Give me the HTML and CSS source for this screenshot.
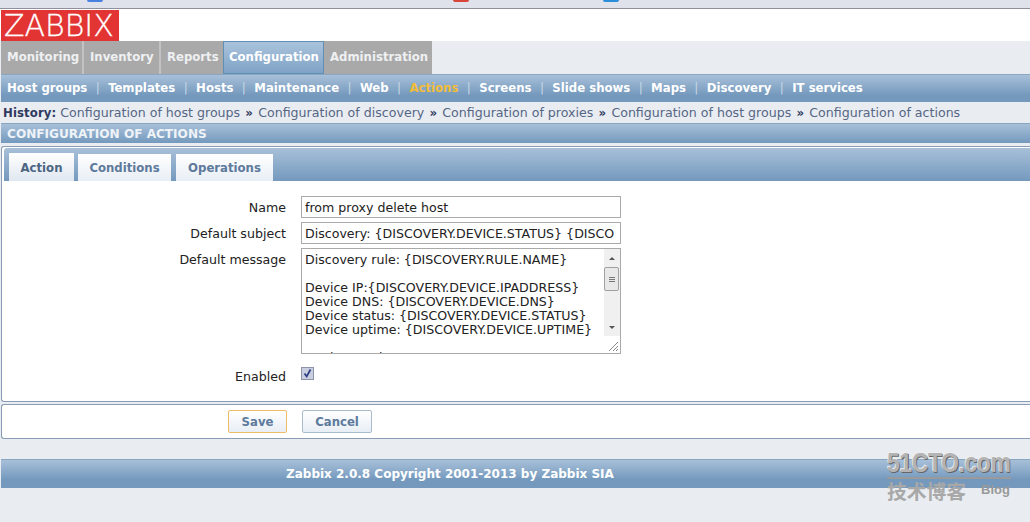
FILE: index.html
```html
<!DOCTYPE html>
<html lang="en">
<head>
<meta charset="utf-8">
<title>Configuration of actions</title>
<link rel="stylesheet" href="styles.css">
</head>
<body>
<div class="browserstrip">
  <span class="fav fav-a"></span><span class="fav fav-b"></span><span class="fav fav-c"></span>
</div>
<header class="logo-row"><div class="logo">ZABBIX</div></header>
<nav class="mainnav">
  <a class="mtab">Monitoring</a><a class="mtab">Inventory</a><a class="mtab">Reports</a><a class="mtab active">Configuration</a><a class="mtab">Administration</a>
</nav>
<nav class="subnav">
  <a>Host groups</a><i>|</i><a>Templates</a><i>|</i><a>Hosts</a><i>|</i><a>Maintenance</a><i>|</i><a>Web</a><i>|</i><a class="cur">Actions</a><i>|</i><a>Screens</a><i>|</i><a>Slide shows</a><i>|</i><a>Maps</a><i>|</i><a>Discovery</a><i>|</i><a>IT services</a>
</nav>
<div class="history"><b>History:</b> Configuration of host groups <b class="sep">»</b> Configuration of discovery <b class="sep">»</b> Configuration of proxies <b class="sep">»</b> Configuration of host groups <b class="sep">»</b> Configuration of actions</div>
<div class="titlebar">CONFIGURATION OF ACTIONS</div>
<section class="panel">
  <div class="tabs">
    <a class="tab on">Action</a><a class="tab">Conditions</a><a class="tab">Operations</a>
  </div>
  <form class="form">
    <label class="lbl">Name</label>
    <div class="field">from proxy delete host</div>
    <label class="lbl">Default subject</label>
    <div class="field">Discovery: {DISCOVERY.DEVICE.STATUS} {DISCO</div>
    <label class="lbl">Default message</label>
    <div class="area">
      <div class="areatext">Discovery rule: {DISCOVERY.RULE.NAME}<br><br>Device IP:{DISCOVERY.DEVICE.IPADDRESS}<br>Device DNS: {DISCOVERY.DEVICE.DNS}<br>Device status: {DISCOVERY.DEVICE.STATUS}<br>Device uptime: {DISCOVERY.DEVICE.UPTIME}<br><br>Device service</div>
      <div class="scrollbar">
        <svg class="arr" width="16" height="18" viewBox="0 0 16 18"><path d="M5 11l3-3 3 3z" fill="#555"/></svg>
        <div class="thumb"><span></span><span></span><span></span></div>
        <div class="track"></div>
        <svg class="arr" width="16" height="17" viewBox="0 0 16 17"><path d="M5 7l3 3 3-3z" fill="#555"/></svg>
        <svg class="grip" width="16" height="17" viewBox="0 0 16 17"><path d="M14 6L5 15M14 10l-5 5M14 13l-2 2" stroke="#888" fill="none"/></svg>
      </div>
    </div>
    <label class="lbl lbl-en">Enabled</label>
    <div class="check"><svg width="13" height="13" viewBox="0 0 13 13"><rect x=".5" y=".5" width="12" height="12" fill="#c9cfe0" stroke="#8e94a8"/><path d="M3.5 6.5l2.2 3 3.8-7" stroke="#2d3f80" stroke-width="1.7" fill="none"/></svg></div>
  </form>
</section>
<section class="actions">
  <button class="btn save" type="button">Save</button><button class="btn" type="button">Cancel</button>
</section>
<footer class="footer">Zabbix 2.0.8 Copyright 2001-2013 by Zabbix SIA</footer>
<div class="mark">
  <div class="mark-top"><span class="mark-word">51CTO.com</span></div>
  <div class="mark-bot"><span class="mark-cn">技术博客</span><span class="mark-blog">Blog</span></div>
</div>
</body>
</html>
```
FILE: styles.css
```css
* { box-sizing: border-box; }
html, body { margin: 0; padding: 0; }
body {
  width: 1030px; height: 522px; overflow: hidden; position: relative;
  background: #e9edf1; color: #222;
  font-family: "DejaVu Sans", Verdana, sans-serif; font-size: 12.6px;
}
.browserstrip {
  height: 9px; background: #dfe2ea; border-bottom: 1px solid #8f909c;
  display: flex; padding-left: 87px;
}
.fav { width: 16px; height: 2px; border-radius: 0 0 2px 2px; display: block; }
.fav-a { background: #4a80e0; }
.fav-b { background: #d9453a; margin-left: 350px; }
.fav-c { background: #2a8fd8; margin-left: 134px; }
.logo-row { height: 32px; background: #fff; padding: 1px 0 0 1px; }
.logo {
  width: 118px; height: 31px; background: #e33434; color: #fff;
  font: 200 30px/31px "DejaVu Sans", sans-serif;
  -webkit-text-stroke: .3px #fff;
  padding-left: 3px; white-space: nowrap;
}
.mainnav { height: 33px; display: flex; padding-left: 1px; }
.mtab {
  height: 33px; background: #a9a9a9; color: #eef0f2;
  font: 700 13px/32px "DejaVu Sans Condensed", "DejaVu Sans", sans-serif;
  padding: 0 6px; border-right: 2px solid #c2c2c2; white-space: nowrap;
}
.mtab:nth-child(1) { width: 83px; }
.mtab:nth-child(2) { width: 77px; }
.mtab:nth-child(3) { width: 62px; border-right: 0; }
.mtab:nth-child(4) { width: 101px; }
.mtab:nth-child(5) { width: 108px; border-right: 0; }
.mtab.active {
  background: linear-gradient(#aac3dc, #7fa3c6); color: #fff; border: 1px solid #5f8fb5; padding: 0 5px; line-height: 30px;
}
.subnav {
  height: 28px; margin-left: 1px; display: flex; align-items: center; padding: 0 0 2px 6px;
  background: linear-gradient(#a8c0d9, #7499bd 75%); border-top: 1px solid #8aa5c0;
  color: #fff; font: 700 13px "DejaVu Sans Condensed", "DejaVu Sans", sans-serif; white-space: nowrap;
}
.subnav i { font: 400 12px "DejaVu Sans", sans-serif; color: #c9d7e5; margin: 0 8.4px; }
.subnav .cur { color: #f2bd3a; }
.history {
  height: 21px; margin-left: 3px; line-height: 21px; color: #566685; white-space: nowrap;
}
.history b { color: #2f3a60; font: 700 13px "DejaVu Sans Condensed", "DejaVu Sans", sans-serif; letter-spacing: .1px; }
.history .sep { margin: 0 1.2px; }
.titlebar {
  height: 20px; margin-left: 1px; background: linear-gradient(#a8c0d9, #7499bd);
  border-top: 1px solid #8aa5c0; color: #eef3f8; font-weight: 700; font-size: 12.1px;
  line-height: 20px; padding-left: 6px; white-space: nowrap;
}
.panel {
  margin: 3px 0 0 1px; height: 256px; background: #fff;
  border: 1px solid #8a9cb3; border-right: 0; border-radius: 3px 0 0 3px; padding: 1px 0 0 2px;
}
.tabs {
  height: 33px; display: flex; align-items: flex-end; gap: 4px; padding-left: 5px;
  background: linear-gradient(#a8c0d9, #7499bd); border-radius: 3px 0 0 0;
}
.tab {
  height: 27px; width: 97px; background: linear-gradient(#fff, #e8eef5); color: #5d7a9c;
  font: 700 13px/27px "DejaVu Sans Condensed", "DejaVu Sans", sans-serif; text-align: center;
}
.tab:nth-child(1) { width: 65px; height: 28px; line-height: 29px; color: #4c6583; background: linear-gradient(#fff, #dfe7f0); }
.tab:nth-child(2) { width: 93px; margin-right: 1px; }
.form {
  display: grid; grid-template-columns: 282px 320px; column-gap: 15px;
  grid-template-rows: 22px 22px 106px 36px; row-gap: 4px; padding-top: 15px;
}
.lbl { text-align: right; line-height: 23px; color: #222; }
.lbl-en { line-height: 36px; padding-top: 1px; }
.field {
  border: 1px solid #aaa; height: 22px; line-height: 21px; padding: 0 3px; background: #fff;
  white-space: nowrap; overflow: hidden; color: #222;
}
.area {
  border: 1px solid #aaa; height: 106px; display: flex; overflow: hidden; background: #fff;
}
.areatext { flex: 1; padding: 4px 3px; line-height: 14px; white-space: nowrap; overflow: hidden; color: #222; }
.scrollbar { width: 16px; flex: none; display: flex; flex-direction: column; background: #f0f0f0; }
.arr, .grip { display: block; flex: none; }
.grip { background: #fff; }
.thumb {
  height: 24px; flex: none; width: 15px; background: #e8e8e8; border: 1px solid #a0a0a0; border-radius: 2px;
  display: flex; flex-direction: column; align-items: center; justify-content: center; gap: 1px;
}
.thumb span { width: 6px; height: 1px; background: #777; display: block; }
.track { flex: 1; }
.check { padding-top: 9px; height: 36px; }
.check svg { display: block; }
.actions {
  margin: 2px 0 0 1px; height: 35px; background: #fff; border: 1px solid #8a9cb3; border-right: 0;
  border-radius: 3px 0 0 3px; padding: 5px 0 0 226px; display: flex; gap: 15px; align-items: flex-start;
}
.btn {
  width: 70px; height: 23px; padding: 0; border: 1px solid #aabbcc; border-radius: 2px;
  background: linear-gradient(#fff, #e8eef5); color: #5d7a9c;
  font: 700 13px "DejaVu Sans Condensed", "DejaVu Sans", sans-serif;
}
.btn.save { width: 59px; border-color: #eebb66; }
.footer {
  margin: 20px 0 0 1px; height: 29px; background: linear-gradient(#a8c0d9, #7499bd 70%);
  border-top: 1px solid #8aa5c0; color: #fff; font-weight: 700; font-size: 12px; line-height: 28px; padding-left: 285px; white-space: nowrap;
}
.mark { position: absolute; left: 887px; top: 448px; width: 124px; color: #b4b4b4; }
.mark-top { height: 31px; border-bottom: 2px solid #9a9a9a; white-space: nowrap; }
.mark-word {
  display: inline-block; font: 700 28px/30px "Liberation Sans", sans-serif; letter-spacing: -.5px;
  text-shadow: 1px 1px 0 #666, -1px -1px 0 #eee; transform: scaleX(.82); transform-origin: left;
}
.mark-bot { display: flex; justify-content: space-between; align-items: flex-start; padding-right: 1px; }
.mark-cn { font: 700 19.8px/24px "Noto Sans CJK SC", sans-serif; color: #a8a8a8; }
.mark-blog { font: 700 13px/16px "Liberation Sans", sans-serif; color: #999; padding-top: 3px; }
```
